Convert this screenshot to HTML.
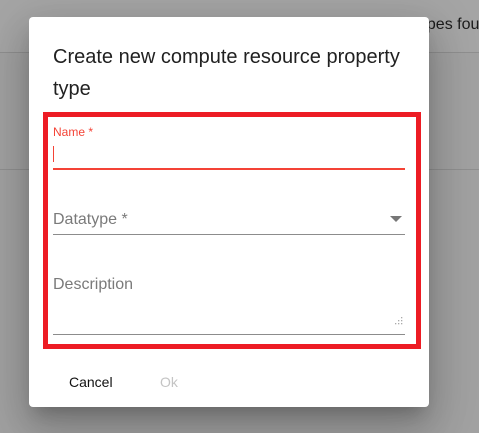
<!DOCTYPE html>
<html><head><style>
body{margin:0;width:479px;height:433px;background:#a1a1a1;position:relative;overflow:hidden;font-family:"Liberation Sans",Arial,sans-serif}
.bg1{position:absolute;left:0;top:0;width:479px;height:52px;background:#a5a5a5;border-bottom:1px solid #8f8f8f}
.bg2{position:absolute;left:0;top:169px;width:479px;height:1px;background:#8f8f8f}
.bgt{position:absolute;left:410px;top:16px;font-size:16px;color:#1c1c1c;white-space:nowrap}
.dlg{position:absolute;left:29px;top:17px;width:400px;height:390px;background:#fff;border-radius:4px;box-shadow:0 11px 15px -7px rgba(0,0,0,.2),0 24px 38px 3px rgba(0,0,0,.14),0 9px 46px 8px rgba(0,0,0,.12)}
.title{position:absolute;left:24px;top:24px;width:360px;font-size:20px;line-height:32px;color:#212121}
.box{position:absolute;left:14px;top:95px;width:368px;height:227px;border:5px solid #ed1c24}
.lbl{position:absolute;left:24px;font-size:12px;color:#f44336}
.ph{position:absolute;left:24px;font-size:16px;color:#7a7a7a}
.line{position:absolute;left:24px;width:352px;height:1px;background:#8c8c8c}
.btn{position:absolute;top:357px;font-size:14px}
</style></head><body>
<div class="bg1"></div><div class="bg2"></div>
<div class="bgt">Types found</div>
<div class="dlg">
<div class="title">Create new compute resource property type</div>
<div class="box"></div>
<div class="lbl" style="top:108px">Name *</div>
<div style="position:absolute;left:24px;top:129px;width:1px;height:16px;background:#f44336"></div>
<div class="line" style="top:151px;height:2px;background:#f44336"></div>
<div class="ph" style="top:194px">Datatype *</div>
<svg style="position:absolute;left:361px;top:199px" width="12" height="6"><path d="M0 0L12 0L6 6Z" fill="#777"/></svg>
<div class="line" style="top:217px"></div>
<div class="ph" style="top:259px">Description</div>
<svg style="position:absolute;left:366px;top:300px" width="8" height="8" fill="#aaa"><rect x="6" y="0" width="1.3" height="1.3"/><rect x="3" y="3" width="1.3" height="1.3"/><rect x="6" y="3" width="1.3" height="1.3"/><rect x="0" y="6" width="1.3" height="1.3"/><rect x="3" y="6" width="1.3" height="1.3"/><rect x="6" y="6" width="1.3" height="1.3"/></svg>
<div class="line" style="top:317px"></div>
<div class="btn" style="left:40px;color:#111">Cancel</div>
<div class="btn" style="left:131px;color:#c4c4c4">Ok</div>
</div>
</body></html>
